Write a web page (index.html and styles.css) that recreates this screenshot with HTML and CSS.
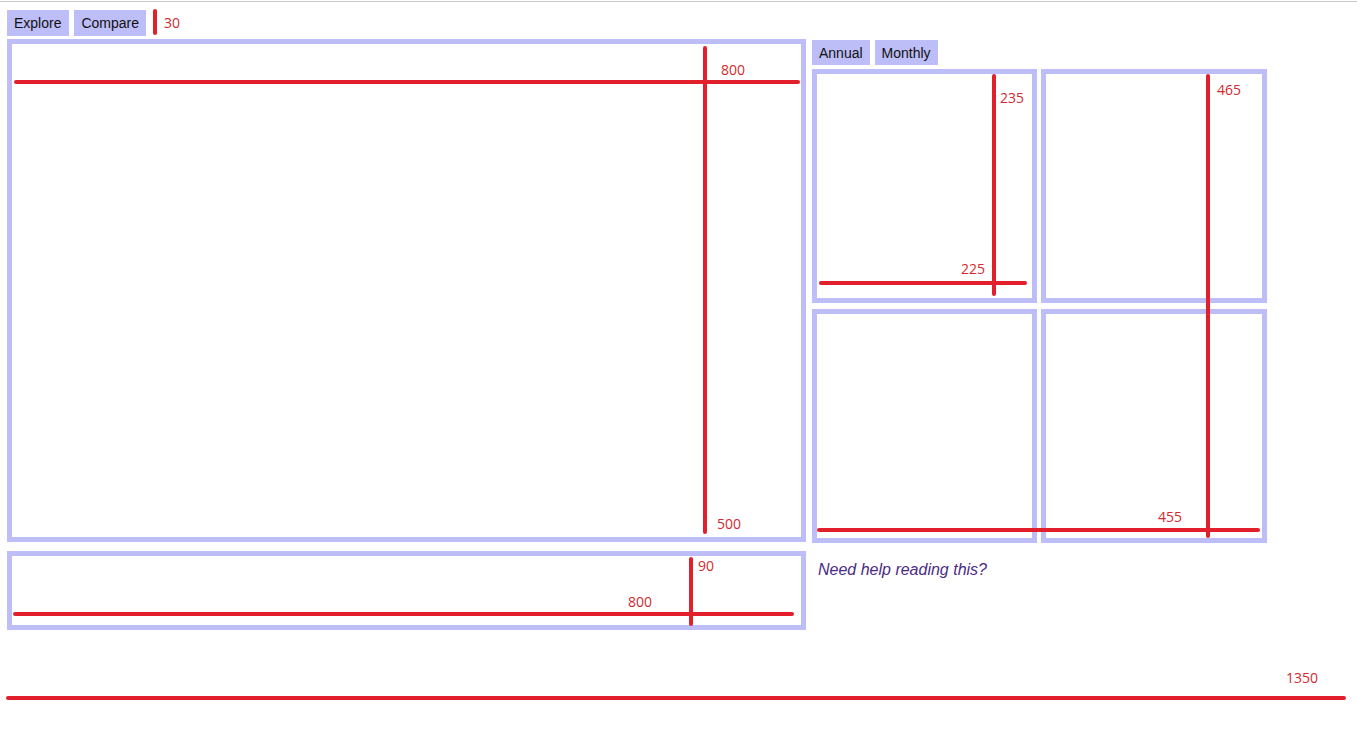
FILE: index.html
```html
<!DOCTYPE html>
<html>
<head>
<meta charset="utf-8">
<link rel="stylesheet" href="styles.css">
</head>
<body>
<div class="page">
  <div class="tabs top-tabs">
    <span class="tab">Explore</span>
    <span class="tab">Compare</span>
  </div>
  <div class="layout">
    <div class="left-col">
      <div class="box main-box"></div>
      <div class="box bottom-box"></div>
    </div>
    <div class="right-col">
      <div class="tabs side-tabs">
        <span class="tab">Annual</span>
        <span class="tab">Monthly</span>
      </div>
      <div class="grid">
        <div class="box cell"></div>
        <div class="box cell"></div>
        <div class="box cell"></div>
        <div class="box cell"></div>
      </div>
      <p class="help">Need help reading this?</p>
    </div>
  </div>

  <div class="annot">
    <div class="rl" style="left:153px;top:9px;width:4px;height:26px"></div>
    <span class="lbl" style="left:164px;top:14px">30</span>

    <div class="rl" style="left:14px;top:80px;width:786px;height:4px"></div>
    <span class="lbl" style="left:721px;top:61px">800</span>
    <div class="rl" style="left:703px;top:46px;width:4px;height:488px"></div>
    <span class="lbl" style="left:717px;top:515px">500</span>

    <div class="rl" style="left:992px;top:74px;width:4px;height:222px"></div>
    <span class="lbl" style="left:1000px;top:89px">235</span>
    <div class="rl" style="left:819px;top:281px;width:208px;height:4px"></div>
    <span class="lbl" style="left:961px;top:260px">225</span>

    <div class="rl" style="left:1206px;top:74px;width:4px;height:464px"></div>
    <span class="lbl" style="left:1217px;top:81px">465</span>
    <div class="rl" style="left:817px;top:528px;width:443px;height:4px"></div>
    <span class="lbl" style="left:1158px;top:508px">455</span>

    <div class="rl" style="left:689px;top:557px;width:4px;height:69px"></div>
    <span class="lbl" style="left:698px;top:557px">90</span>
    <div class="rl" style="left:13px;top:612px;width:781px;height:4px"></div>
    <span class="lbl" style="left:628px;top:593px">800</span>

    <div class="rl" style="left:6px;top:696px;width:1340px;height:4px"></div>
    <span class="lbl" style="left:1286px;top:669px">1350</span>
  </div>
</div>
</body>
</html>
```

FILE: styles.css
```css
html, body {
  margin: 0;
  padding: 0;
  background: #ffffff;
}
body {
  width: 1357px;
  height: 748px;
  overflow: hidden;
  font-family: "Liberation Sans", Arial, sans-serif;
}
.page {
  position: relative;
  margin-top: 1px;
  border-top: 1px solid #c9c9c9;
  height: 746px;
  box-sizing: border-box;
  padding: 8px 0 0 7px;
}
.tabs {
  display: flex;
  gap: 5px;
}
.tab {
  display: flex;
  align-items: center;
  background: #bdbdf7;
  color: #111111;
  font-family: "Liberation Sans", Arial, sans-serif;
  font-size: 14px;
  height: 25px;
  padding: 0 7px;
}
.top-tabs {
  height: 26px;
}
.top-tabs .tab {
  height: 26px;
}
.top-tabs .tab:first-child {
  padding-right: 8px;
}
.layout {
  display: flex;
  gap: 6px;
  margin-top: 3px;
}
.left-col {
  display: flex;
  flex-direction: column;
  gap: 9px;
}
.box {
  box-sizing: border-box;
  border: 5px solid #bdbdf7;
  background: #ffffff;
}
.main-box {
  width: 799px;
  height: 503px;
}
.bottom-box {
  width: 799px;
  height: 79px;
}
.right-col {
  padding-top: 1px;
}
.side-tabs .tab {
  height: 25px;
}
.grid {
  margin-top: 4px;
  display: grid;
  grid-template-columns: 225px 226px;
  grid-template-rows: 234px 234px;
  column-gap: 4px;
  row-gap: 6px;
}
.help {
  margin: 18px 0 0 6px;
  font-style: italic;
  font-size: 16px;
  color: #4b2b86;
  font-family: "Liberation Sans", Arial, sans-serif;
}
.annot {
  position: absolute;
  left: 0;
  top: -2px;
  width: 0;
  height: 0;
}
.rl {
  position: absolute;
  background: #e2202b;
  border-radius: 2px;
}
.lbl {
  position: absolute;
  font-family: "Open Sans", sans-serif;
  font-size: 14px;
  line-height: 18px;
  color: #d22a2f;
}
```
